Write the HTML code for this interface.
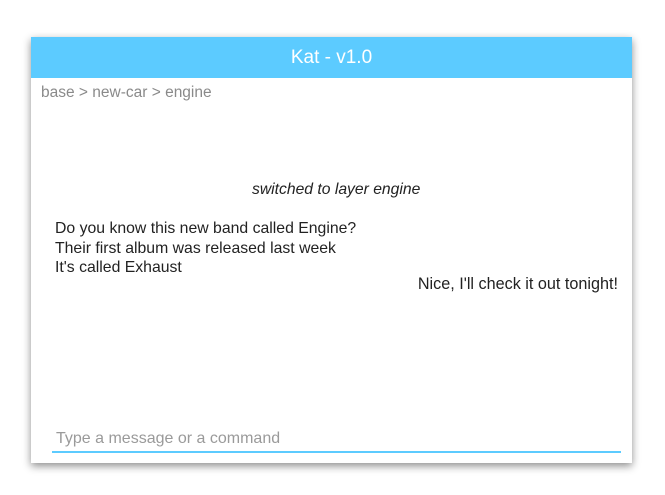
<!DOCTYPE html>
<html><head><style>
html,body{margin:0;padding:0;background:#fff;width:665px;height:495px;overflow:hidden;font-family:"Liberation Sans",sans-serif;}
.card{position:absolute;left:31px;top:37px;width:601px;height:426px;background:#fff;box-shadow:0 3px 8px rgba(0,0,0,0.45);}
.hdr{height:41px;background:#5ccbff;color:#fff;font-size:19px;text-align:center;line-height:42px;}
.t{position:absolute;white-space:nowrap;}
</style></head><body>
<div class="card">
<div class="hdr">Kat - v1.0</div>
<div class="t" style="left:10px;top:47px;font-size:15.5px;color:#8a8a8a;">base &gt; new-car &gt; engine</div>
<div class="t" style="left:221px;top:144px;font-size:15.7px;font-style:italic;color:#222;">switched to layer engine</div>
<div class="t" style="left:24px;top:182px;font-size:15.8px;color:#222;line-height:19.5px;">Do you know this new band called Engine?<br>Their first album was released last week<br>It's called Exhaust</div>
<div class="t" style="right:14px;top:238px;font-size:16.2px;color:#222;">Nice, I'll check it out tonight!</div>
<div class="t" style="left:25px;top:393px;font-size:16px;color:#9a9a9a;">Type a message or a command</div>
<div style="position:absolute;left:21px;top:414px;width:569px;height:2px;background:#5ccbff;"></div>
</div>
</body></html>
